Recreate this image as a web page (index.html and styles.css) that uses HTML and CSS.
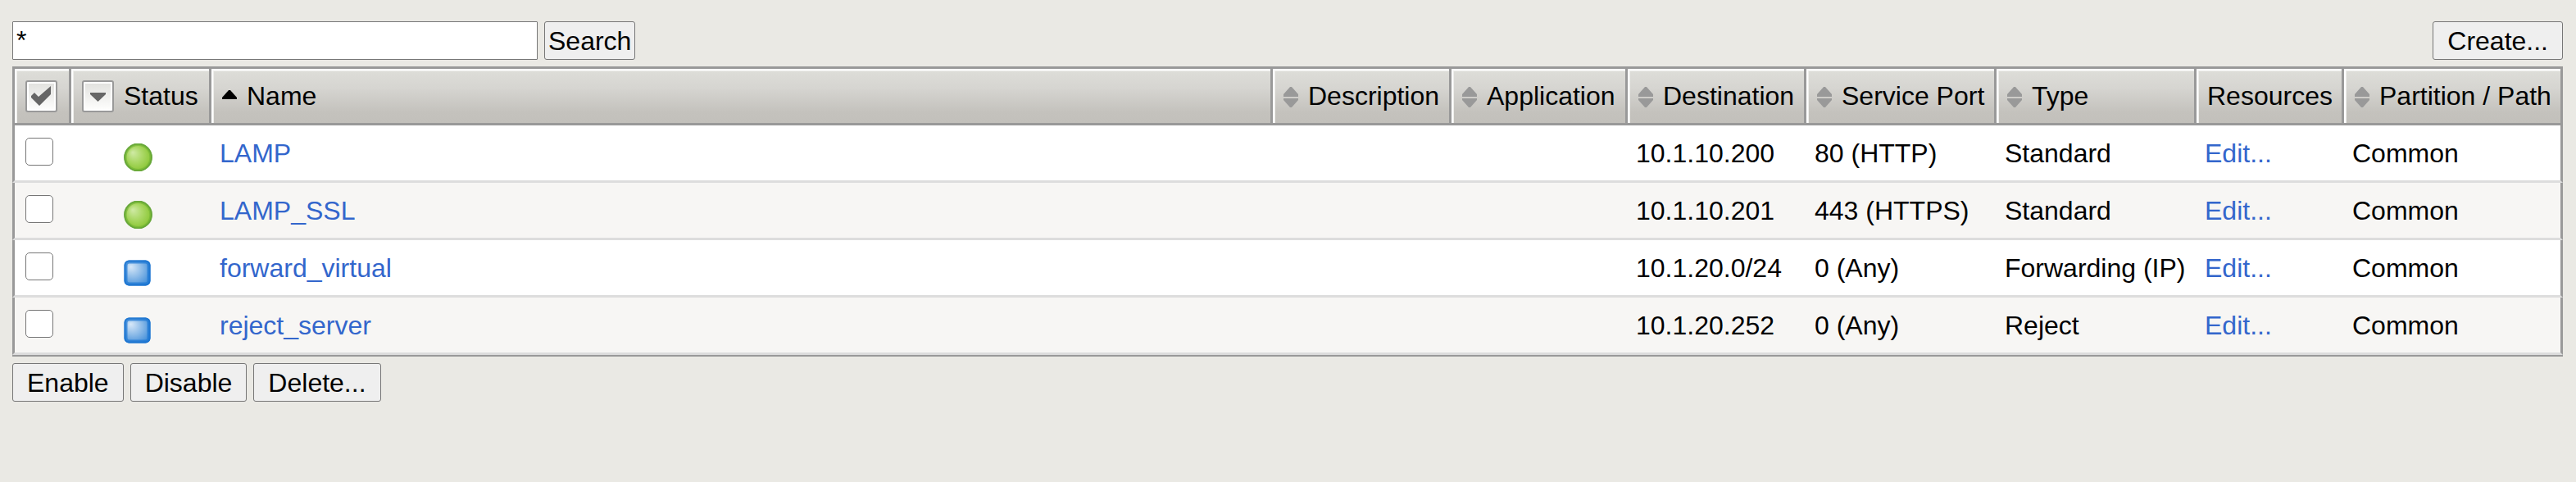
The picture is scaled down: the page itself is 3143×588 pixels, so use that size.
FILE: index.html
```html
<!DOCTYPE html>
<html lang="en">
<head>
<meta charset="utf-8">
<title>Virtual Server List</title>
<link rel="stylesheet" href="styles.css">
</head>
<body>
<svg class="defs" aria-hidden="true">
  <defs>
    <radialGradient id="green" cx="0.5" cy="0.5" r="0.6" fx="0.3" fy="0.32">
      <stop offset="0" stop-color="#d0eaa6"/><stop offset="0.45" stop-color="#abd866"/><stop offset="1" stop-color="#7fc024"/>
    </radialGradient>
    <radialGradient id="blue" cx="0.4" cy="0.4" r="0.7" fx="0.25" fy="0.25">
      <stop offset="0" stop-color="#d8e8f8"/><stop offset="0.5" stop-color="#8dbbe8"/><stop offset="1" stop-color="#3d8bd8"/>
    </radialGradient>
    <linearGradient id="face" x1="0" y1="0" x2="0" y2="1">
      <stop offset="0" stop-color="#e2e2df"/><stop offset="1" stop-color="#fdfdfc"/>
    </linearGradient>
    <symbol id="sort" viewBox="0 0 18 30"><path d="M8 4H10L18 13V16H0V13ZM0 18H18V20L10 29H8L0 20Z" fill="#999"/></symbol>
    <symbol id="sort-up" viewBox="0 0 18 30"><path d="M8 8H10L18 17V19H0V17Z" fill="#000"/></symbol>
    <symbol id="available" viewBox="0 0 35 34">
      <circle cx="17.5" cy="17" r="17" fill="url(#green)"/>
      <circle cx="17.5" cy="17" r="15.5" fill="none" stroke="#6fb033" stroke-width="3" stroke-opacity="0.6"/>
      <circle cx="17.5" cy="17" r="16.5" fill="none" stroke="#62a338" stroke-width="2" stroke-opacity="0.8"/>
    </symbol>
    <symbol id="unknown" viewBox="0 0 33 34">
      <rect x="0.5" y="2.5" width="32" height="31" rx="6" fill="url(#blue)"/>
      <rect x="2.5" y="4.5" width="28" height="27" rx="4" fill="none" stroke="#1d78d4" stroke-width="4" stroke-opacity="0.7"/>
      <rect x="1.5" y="3.5" width="30" height="29" rx="5" fill="none" stroke="#1a72cf" stroke-width="2" stroke-opacity="0.7"/>
    </symbol>
  </defs>
</svg>
<main class="page">
  <form class="toolbar">
    <input class="search" type="text" value="*" aria-label="Search virtual servers">
    <button class="btn btn-tight" type="button">Search</button>
    <button class="btn btn-create" type="button">Create...</button>
  </form>
  <table class="list">
    <colgroup>
      <col class="c-check"><col class="c-status"><col><col class="c-desc"><col class="c-app"><col class="c-dest"><col class="c-port"><col class="c-type"><col class="c-res"><col class="c-part">
    </colgroup>
    <thead>
      <tr>
        <th><div class="head"><button class="mini" type="button" aria-label="Select all"><svg viewBox="0 0 39 39"><rect x="1" y="1" width="37" height="37" rx="2" fill="#fff" stroke="#999" stroke-width="2"/><rect x="4" y="4" width="31" height="31" fill="url(#face)"/><path d="M7 19L11 15L16 20L31 7V17L17 31L7 21Z" fill="#666"/></svg></button></div></th>
        <th><div class="head"><button class="mini" type="button" aria-label="Filter by status"><svg viewBox="0 0 39 39"><rect x="1" y="1" width="37" height="37" rx="2" fill="#fff" stroke="#999" stroke-width="2"/><rect x="4" y="4" width="31" height="31" fill="url(#face)"/><path d="M10 15H29V17L19.5 26L10 17Z" fill="#666"/></svg></button>Status</div></th>
        <th><div class="head"><svg class="sort"><use href="#sort-up"/></svg>Name</div></th>
        <th><div class="head"><svg class="sort"><use href="#sort"/></svg>Description</div></th>
        <th><div class="head"><svg class="sort"><use href="#sort"/></svg>Application</div></th>
        <th><div class="head"><svg class="sort"><use href="#sort"/></svg>Destination</div></th>
        <th><div class="head"><svg class="sort"><use href="#sort"/></svg>Service Port</div></th>
        <th><div class="head"><svg class="sort"><use href="#sort"/></svg>Type</div></th>
        <th><div class="head">Resources</div></th>
        <th><div class="head"><svg class="sort"><use href="#sort"/></svg>Partition / Path</div></th>
      </tr>
    </thead>
    <tbody>
      <tr>
        <td><input class="tick" type="checkbox" aria-label="Select LAMP"></td>
        <td><svg class="state" role="img" aria-label="Available"><use href="#available"/></svg></td>
        <td><a href="#">LAMP</a></td><td></td><td></td>
        <td>10.1.10.200</td><td>80 (HTTP)</td><td>Standard</td><td><a href="#">Edit...</a></td><td>Common</td>
      </tr>
      <tr>
        <td><input class="tick" type="checkbox" aria-label="Select LAMP_SSL"></td>
        <td><svg class="state" role="img" aria-label="Available"><use href="#available"/></svg></td>
        <td><a href="#">LAMP_SSL</a></td><td></td><td></td>
        <td>10.1.10.201</td><td>443 (HTTPS)</td><td>Standard</td><td><a href="#">Edit...</a></td><td>Common</td>
      </tr>
      <tr>
        <td><input class="tick" type="checkbox" aria-label="Select forward_virtual"></td>
        <td><svg class="state state-square" role="img" aria-label="Unknown"><use href="#unknown"/></svg></td>
        <td><a href="#">forward_virtual</a></td><td></td><td></td>
        <td>10.1.20.0/24</td><td>0 (Any)</td><td>Forwarding (IP)</td><td><a href="#">Edit...</a></td><td>Common</td>
      </tr>
      <tr>
        <td><input class="tick" type="checkbox" aria-label="Select reject_server"></td>
        <td><svg class="state state-square" role="img" aria-label="Unknown"><use href="#unknown"/></svg></td>
        <td><a href="#">reject_server</a></td><td></td><td></td>
        <td>10.1.20.252</td><td>0 (Any)</td><td>Reject</td><td><a href="#">Edit...</a></td><td>Common</td>
      </tr>
    </tbody>
  </table>
  <div class="actions">
    <button class="btn" type="button">Enable</button>
    <button class="btn" type="button">Disable</button>
    <button class="btn" type="button">Delete...</button>
  </div>
</main>
</body>
</html>
```
FILE: styles.css
```css
* { box-sizing: border-box; }

body {
  margin: 0;
  background: #eae9e4;
  color: #000;
  font: 32px/36px "Liberation Sans", Arial, sans-serif;
}

.defs { position: absolute; width: 0; height: 0; }

.page {
  display: flex;
  flex-direction: column;
  gap: 8px;
  padding: 26px 16px 26px 15px;
}

.toolbar, .actions { display: flex; gap: 8px; }

.search {
  width: 641px;
  height: 47px;
  padding: 0 4px;
  border: 1px solid #767676;
  border-radius: 1px;
  background: #fff;
  color: #000;
  font: inherit;
}

.btn {
  height: 47px;
  padding: 0 17px;
  border: 1px solid #767676;
  border-radius: 3px;
  background: #efefef;
  color: #000;
  font: inherit;
}
.btn-tight { padding: 0 4px; }
.btn-create { margin-left: auto; }

.list {
  width: 100%;
  table-layout: fixed;
  border-collapse: separate;
  border-spacing: 0;
  border-bottom: 2px solid #999;
  white-space: nowrap;
}
.c-check { width: 69px; }
.c-status { width: 171px; }
.c-desc { width: 218px; }
.c-app { width: 215px; }
.c-dest { width: 218px; }
.c-port { width: 232px; }
.c-type { width: 244px; }
.c-res { width: 180px; }
.c-part { width: 270px; }

th {
  height: 72px;
  padding: 0 0 0 13px;
  border: 3px solid #999;
  border-right-width: 0;
  background: linear-gradient(#deded9, #d6d5d1 35%, #c4c2bd 80%, #c2c0bb);
  box-shadow: inset 2px 2px #fff, inset 3px 3px #eeeeeb;
  font-weight: normal;
  text-align: left;
}
th:last-child { border-right-width: 3px; }

.head { display: flex; align-items: center; gap: 12px; }

.mini {
  width: 39px;
  height: 39px;
  padding: 0;
  border: 0;
  background: none;
}
.mini svg { display: block; width: 39px; height: 39px; }

.sort { width: 18px; height: 30px; }

td {
  height: 70px;
  padding: 0 0 0 13px;
  border-bottom: 3px solid #ddd;
  background: #fff;
}
td:first-child { border-left: 3px solid #999; }
td:last-child { border-right: 3px solid #999; }
tbody tr:nth-child(even) td { background: #f7f6f4; }

a { color: #36c; text-decoration: none; }

.tick {
  appearance: none;
  display: block;
  width: 34px;
  height: 34px;
  margin: 0 0 3px;
  border: 1px solid #767676;
  border-radius: 5px;
  background: #fff;
}

.state {
  display: block;
  width: 35px;
  height: 34px;
  margin: 10px 0 0 54px;
}
.state-square { width: 33px; }
```
